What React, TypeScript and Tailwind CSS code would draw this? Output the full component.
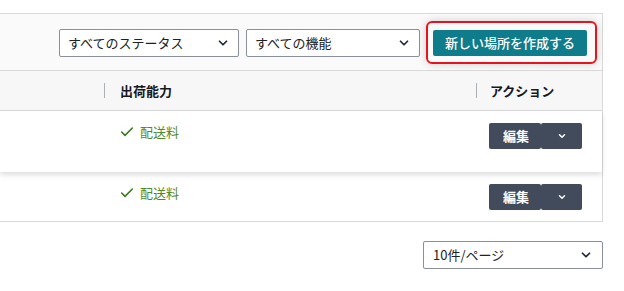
import { ChevronDown, Check } from 'lucide-react';

const font = { fontFamily: '"Noto Sans CJK JP", "Noto Sans", sans-serif' };

const Select = ({ label, className }: { label: string; className: string }) => (
  <div
    className={`flex items-center justify-between h-[28px] border border-[#8a9099] rounded-[2px] bg-white pl-[8px] pr-[8px] text-[13px] text-[#222] ${className}`}
  >
    <span>{label}</span>
    <ChevronDown size={14} strokeWidth={3} className="text-[#1f2b3d]" />
  </div>
);

const rows = [
  { height: 'h-[61px]', raised: true },
  { height: 'h-[49px]', raised: false },
];

export default function App() {
  return (
    <div className="w-[624px] h-[291px] bg-white pt-[13px]" style={font}>
      <div className="w-[603px] border-t border-r border-b border-[#d9d9d9]">
        {/* toolbar */}
        <div className="flex items-center justify-end h-[57px] bg-[#fafafa] border-b border-[#d9d9d9] pr-[15px] pt-[1px]">
          <Select label="すべてのステータス" className="w-[180px]" />
          <Select label="すべての機能" className="w-[174px] ml-[7px]" />
          <div className="relative ml-[13px]">
            <span className="absolute -left-[7px] -right-[10px] -top-[9px] -bottom-[8px] rounded-[6px] border-2 border-[#e8141c] shadow-[0_0_8px_rgba(0,0,0,0.18)]" />
            <button className="relative flex items-center justify-center w-[154px] h-[26px] bg-[#0f7c8c] rounded-[2px] text-white text-[13px] font-medium">
              新しい場所を作成する
            </button>
          </div>
        </div>

        {/* header */}
        <div className="flex items-center h-[40px] bg-[#f7f7f7] border-b border-[#d9d9d9] text-[13px] font-bold text-[#16191f]">
          <div className="w-[104px]" />
          <div className="flex items-center w-[372px]">
            <span className="w-px h-[15px] bg-[#aab1b8]" />
            <span className="ml-[15px]">出荷能力</span>
          </div>
          <div className="flex items-center flex-1">
            <span className="w-px h-[15px] bg-[#aab1b8]" />
            <span className="ml-[13px]">アクション</span>
          </div>
        </div>

        {/* rows */}
        {rows.map((row, i) => (
          <div
            key={i}
            className={`relative flex items-start pt-[12px] bg-white ${row.height} ${
              row.raised ? 'z-10 shadow-[0_3px_5px_rgba(0,0,0,0.13)]' : ''
            }`}
          >
            <div className="w-[104px]" />
            <div className="flex items-center w-[372px] pl-[15px] text-[13px] text-[#528a2a] h-[17px]">
              <Check size={16} strokeWidth={2.4} className="text-[#3b7a1e]" />
              <span className="ml-[5px]">配送料</span>
            </div>
            <div className="flex pl-[13px]">
              <button className="flex items-center w-[52px] h-[26px] bg-[#414b5b] rounded-[2px] pl-[14px] text-white text-[13px] font-bold">
                編集
              </button>
              <button className="flex items-center justify-center w-[41px] h-[26px] bg-[#414b5b] rounded-[2px] text-white">
                <ChevronDown size={10} strokeWidth={3.5} />
              </button>
            </div>
          </div>
        ))}
      </div>

      {/* pagination */}
      <div className="flex mt-[19px]">
        <Select label="10件/ページ" className="w-[180px] ml-[423px] pl-[9px] pr-[9px]" />
      </div>
    </div>
  );
}
